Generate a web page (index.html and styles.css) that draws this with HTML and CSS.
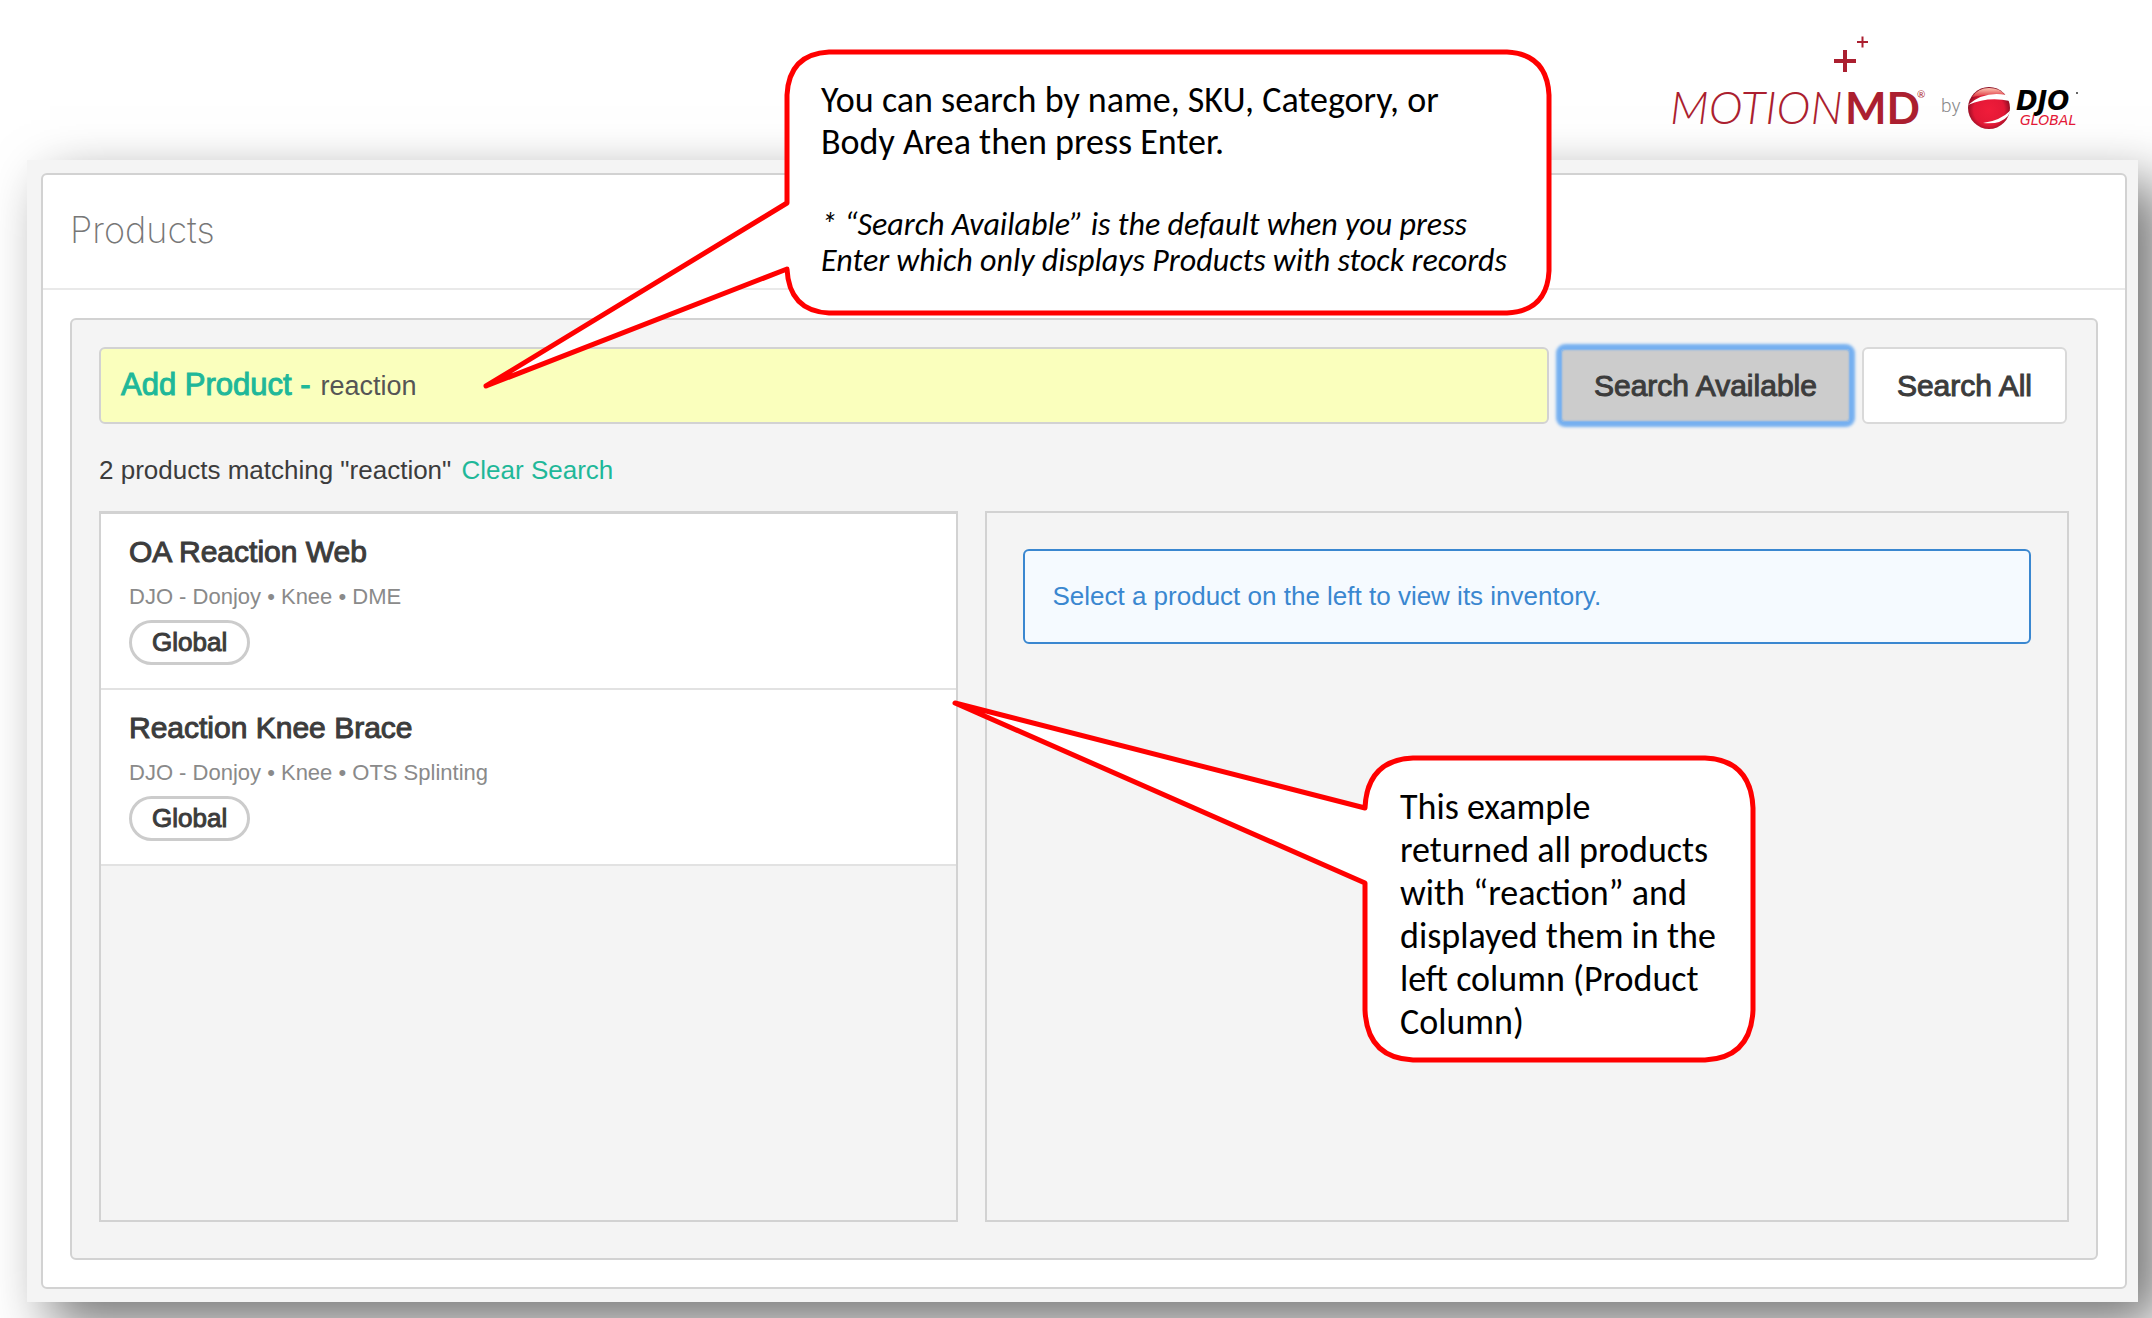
FILE: index.html
```html
<!DOCTYPE html>
<html lang="en">
<head>
<meta charset="utf-8">
<title>MotionMD - Products</title>
<link rel="stylesheet" href="styles.css">
</head>
<body>
<div class="slide">
  <header class="brand">
    <svg class="brand-logo" viewBox="0 0 436 110" role="img" aria-label="MotionMD by DJO Global">
      <defs>
        <radialGradient id="ball" cx="50%" cy="55%" r="52%">
          <stop offset="0" stop-color="#f01c3a"/>
          <stop offset="0.7" stop-color="#e31836"/>
          <stop offset="1" stop-color="#8c0d22"/>
        </radialGradient>
        <linearGradient id="shine" x1="0" y1="0" x2="0" y2="1">
          <stop offset="0" stop-color="#fbc8b4"/>
          <stop offset="1" stop-color="#e0303c"/>
        </linearGradient>
      </defs>
      <path class="plus" d="M164 41h22M175 30v22" stroke-width="4"/>
      <path class="plus" d="M187 22h11M192.500 16.500v11" stroke-width="2"/>
      <text class="logo-motion" x="0" y="104">MOTION</text>
      <text class="logo-md" x="175" y="104">MD</text>
      <text class="logo-reg" x="247" y="78">®</text>
      <text class="logo-by" x="271" y="92">by</text>
      <circle cx="319" cy="88" r="21" fill="url(#ball)"/>
      <path d="M302 77Q308 68 319 68Q330 68 335 75Q317 74 302 77Z" fill="url(#shine)"/>
      <path d="M298 85Q314 71 336 75L340 81Q318 76 298 85Z" fill="#fff"/>
      <path d="M313 103Q330 101 341 90L338 96Q330 105 313 103Z" fill="#fff"/>
      <text class="logo-djo" x="346" y="90">DJO</text>
      <text class="logo-global" x="350" y="105">GLOBAL</text>
      <circle cx="407" cy="73" r="1" fill="#333"/>
    </svg>
  </header>

  <main class="frame">
    <section class="card">
      <h1 class="card-title">Products</h1>
      <div class="panel">
        <form class="search">
          <div class="search-box">
            <label class="search-label" for="q">Add Product -</label>
            <input class="search-input" id="q" type="text" value="reaction">
          </div>
          <button class="btn btn-focus" type="button">Search Available</button>
          <button class="btn" type="button">Search All</button>
        </form>
        <p class="summary">2 products matching "reaction" <a class="clear" href="#">Clear Search</a></p>
        <div class="columns">
          <ul class="products">
            <li class="product">
              <h2 class="product-name">OA Reaction Web</h2>
              <p class="product-meta">DJO - Donjoy • Knee • DME</p>
              <span class="tag">Global</span>
            </li>
            <li class="product">
              <h2 class="product-name">Reaction Knee Brace</h2>
              <p class="product-meta">DJO - Donjoy • Knee • OTS Splinting</p>
              <span class="tag">Global</span>
            </li>
          </ul>
          <div class="inventory">
            <p class="notice">Select a product on the left to view its inventory.</p>
          </div>
        </div>
      </div>
    </section>
  </main>

  <aside class="callout callout-search">
    <svg class="callout-shape" viewBox="0 0 1072 344" aria-hidden="true">
      <path d="M304 156V48Q306 7 346 5H1024Q1064 7 1066 48V224Q1064 264 1024 266H346Q306 264 304 222L3 339Z"/>
    </svg>
    <div class="callout-text">
      <p>You can search by name, SKU, Category, or<br>Body Area then press Enter.</p>
      <p class="callout-note">* “Search Available” is the default when you press<br>Enter which only displays Products with stock records</p>
    </div>
  </aside>

  <aside class="callout callout-results">
    <svg class="callout-shape" viewBox="0 0 804 364" aria-hidden="true">
      <path d="M413 108Q415 60 461 58H753Q799 60 801 108V310Q799 358 753 360H461Q415 358 413 310V183L3 3Z"/>
    </svg>
    <div class="callout-text">
      <p>This example<br>returned all products<br>with “reaction” and<br>displayed them in the<br>left column (Product<br>Column)</p>
    </div>
  </aside>
</div>
</body>
</html>
```
FILE: styles.css
```css
* { box-sizing: border-box; }

body {
  margin: 0;
  background: #fff;
  color: #3c3c3c;
  font-family: "Liberation Sans", Arial, sans-serif;
  font-size: 26px;
  line-height: 32px;
}

h1, h2, p, ul { margin: 0; padding: 0; }

.slide {
  position: relative;
  overflow: hidden;
  padding: 0 14px 16px 27px;
}

/* Brand */
.brand {
  display: flex;
  justify-content: flex-end;
  height: 160px;
  padding: 20px 32px 0 0;
}
.brand-logo { width: 436px; height: 110px; overflow: visible; }
.plus { stroke: #ab1f30; fill: none; }
.logo-motion { font: italic 300 46px Lato, sans-serif; fill: #ab1f30; }
.logo-md { font: 700 44px Lato, sans-serif; fill: #ab1f30; }
.logo-reg { font: 400 10px Lato, sans-serif; fill: #ab1f30; }
.logo-by { font: 300 19px Roboto, sans-serif; fill: #8a8a8a; }
.logo-djo { font: italic 700 26px "DejaVu Sans", sans-serif; fill: #000; }
.logo-global { font: italic 400 14px "DejaVu Sans", sans-serif; fill: #e31836; }

/* Application frame */
.frame {
  padding: 13px 11px 13px 14px;
  background: #f4f4f4;
  box-shadow: 23px 23px 52px rgba(0, 0, 0, 0.54);
}
.card {
  border: 2px solid #d2d2d2;
  border-radius: 6px;
  background: #fff;
}
.card-title {
  padding: 31px 27px 34px;
  border-bottom: 2px solid #e9e9e9;
  color: #777;
  font: 200 36px/48px Inter, sans-serif;
}
.panel {
  margin: 28px 27px 27px;
  padding: 27px 27px 36px;
  border: 2px solid #d2d2d2;
  border-radius: 6px;
  background: #f4f4f4;
}

/* Search row */
.search { display: flex; gap: 10px; padding-right: 2px; }
.search-box {
  display: flex;
  flex: 1;
  align-items: center;
  gap: 10px;
  height: 77px;
  padding: 0 20px;
  border: 2px solid #d2d2d2;
  border-radius: 6px;
  background: #faffbd;
}
.search-label {
  padding-bottom: 2px;
  color: #1fb899;
  font-size: 31px;
  -webkit-text-stroke: 1px;
}
.search-input {
  flex: 1;
  min-width: 0;
  padding: 0;
  border: 0;
  outline: 0;
  background: none;
  color: #555;
  font: 27px/32px "Liberation Sans", Arial, sans-serif;
}
.btn {
  height: 77px;
  padding: 0 33px;
  border: 2px solid #d9d9d9;
  border-radius: 6px;
  background: #fff;
  color: #3c3c3c;
  font: 30px/36px "Liberation Sans", Arial, sans-serif;
  -webkit-text-stroke: 1px;
}
.btn-focus {
  border-color: #76b0f0;
  background: #ccc;
  box-shadow: 0 0 3px 3px #76b0f0, inset 0 0 2px 1px #76b0f0;
}
.summary { padding: 30px 0 25px; }
.clear { margin-left: 3px; color: #1fb899; text-decoration: none; }

/* Result columns */
.columns {
  display: grid;
  grid-template-columns: 859fr 1083fr;
  gap: 27px;
  min-height: 711px;
}
.products, .inventory { border: 2px solid #d2d2d2; }
.products { border-top-width: 3px; list-style: none; }
.product {
  height: 176px;
  padding: 20px 28px;
  border-bottom: 2px solid #e2e2e2;
  background: #fff;
}
.product-name {
  color: #3c3c3c;
  font-size: 30px;
  font-weight: 400;
  line-height: 36px;
  -webkit-text-stroke: 1px;
}
.product-meta {
  padding: 13px 0 9px;
  color: #8a8a8a;
  font-size: 22px;
  line-height: 28px;
}
.tag {
  display: inline-block;
  padding: 3px 20px 4px;
  border: 3px solid #ccc;
  border-radius: 23px;
  line-height: 32px;
  -webkit-text-stroke: 1px;
}
.inventory { padding: 36px; }
.notice {
  padding: 29px 27px 30px;
  border: 2px solid #3a87d0;
  border-radius: 6px;
  background: #f5faff;
  color: #3a87d0;
}

/* Annotations laid over the application */
.callout { position: absolute; color: #000; font: 36px/42px Calibri, Carlito, Lato, sans-serif; }
.callout-search { top: 47px; left: 483px; width: 1072px; height: 344px; }
.callout-results { top: 700px; left: 952px; width: 804px; height: 364px; }
.callout-shape { position: absolute; inset: 0; overflow: visible; }
.callout-shape path { fill: #fff; stroke: #f00; stroke-width: 5px; stroke-linejoin: round; }
.callout-text { position: relative; white-space: nowrap; }
.callout-search .callout-text { padding: 32px 0 0 338px; }
.callout-results .callout-text { padding: 86px 0 0 448px; line-height: 43px; }
.callout-note { padding-top: 44px; font-size: 32px; font-style: italic; line-height: 36px; }
```
